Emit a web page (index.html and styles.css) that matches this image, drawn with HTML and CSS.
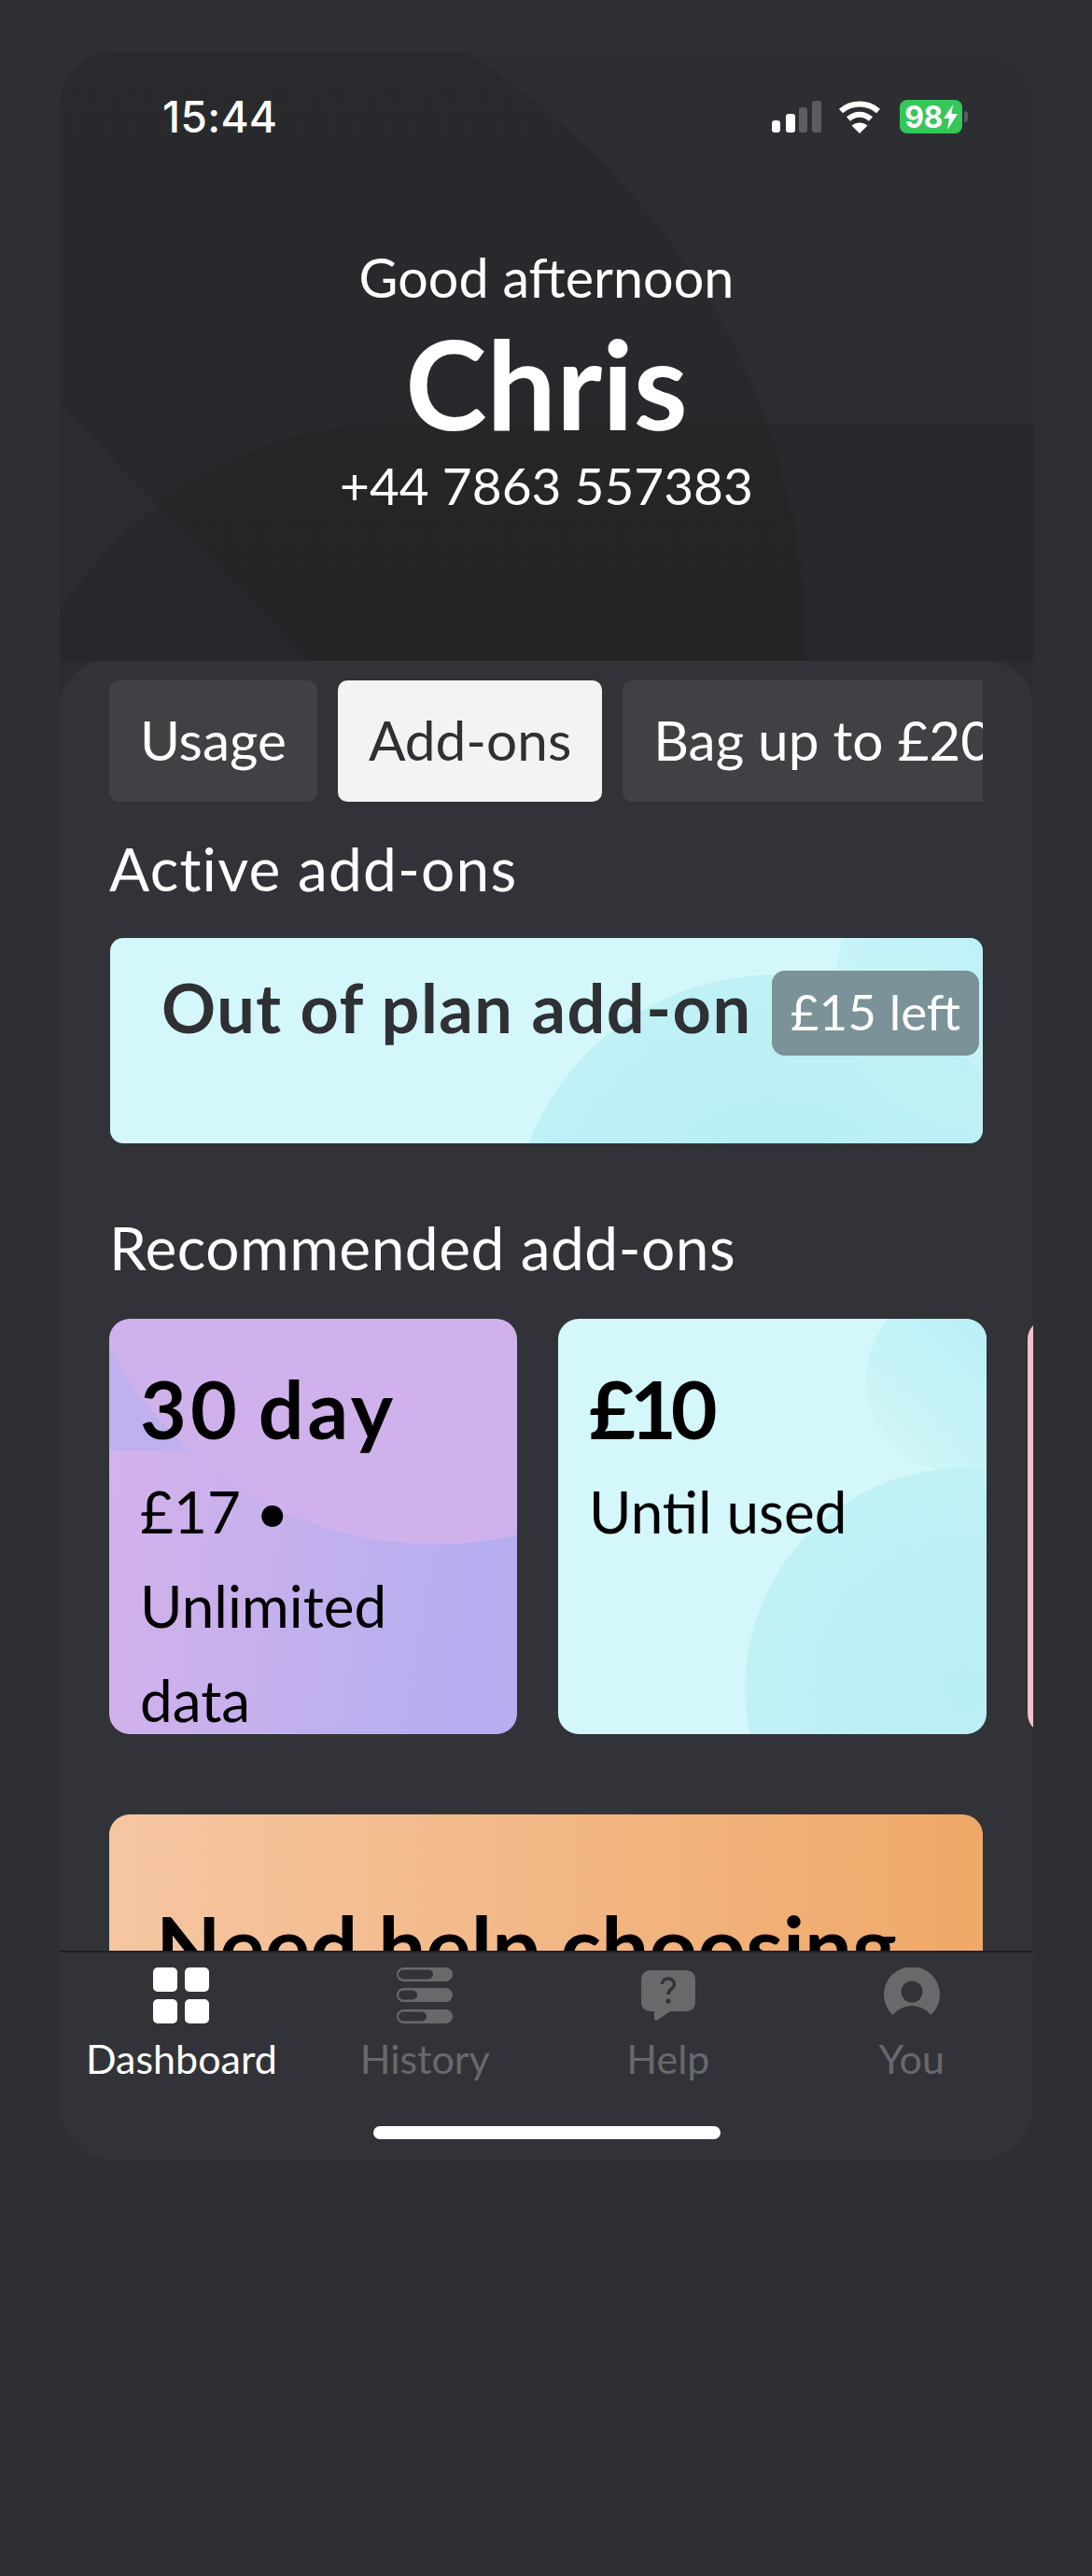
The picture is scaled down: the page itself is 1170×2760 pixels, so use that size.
FILE: index.html
```html
<!DOCTYPE html>
<html>
<head>
  <title>Dashboard</title>
  <link rel="stylesheet" href="styles.css">
</head>
<body>
  <div class="screen">
    <!-- faint shapes behind the header -->
    <svg class="hero-shapes" width="1043" height="652" viewBox="0 0 1043 652">
      <path d="M0 60Q0 0 60 0L435 0C580 90 800 300 800 652L268 652L0 377Z"/>
      <path d="M0 600C90 460 230 397 365 397L1043 397L1043 652L0 652Z"/>
    </svg>

    <div class="status-bar">
      <span class="time">15:44</span>
      <div class="status-icons">
        <svg class="signal" width="53" height="34" viewBox="0 0 53 34">
          <rect x="0" y="21" width="9" height="13" rx="3" fill="#fff"/>
          <rect x="15" y="14" width="10" height="20" rx="3" fill="#fff"/>
          <rect x="29" y="7" width="9" height="27" rx="3" fill="#5c5d60"/>
          <rect x="43" y="0" width="10" height="34" rx="3" fill="#5c5d60"/>
        </svg>
        <svg class="wifi" width="46" height="35" viewBox="0 0 46 35" fill="none" stroke="#fff" stroke-width="6">
          <path d="M3 11C14 1 32 1 43 11"/>
          <path d="M11 19.500C18 13 28 13 35 19.500"/>
          <path d="M23 35L14.500 26.500C19 22.500 27 22.500 31.500 26.500Z" fill="#fff" stroke="none"/>
        </svg>
        <div class="battery">
          <span class="battery-level">98</span>
          <svg width="15" height="27" viewBox="0 0 15 27"><path d="M10 0L0 15L6 15L4 27L15 10L8.500 10Z" fill="#fff"/></svg>
        </div>
        <div class="battery-nub"></div>
      </div>
    </div>

    <div class="greeting">
      <p class="hello">Good afternoon</p>
      <h1 class="name">Chris</h1>
      <p class="phone">+44 7863 557383</p>
    </div>

    <div class="panel">
      <div class="content">
        <div class="tabs">
          <div class="tab">Usage</div>
          <div class="tab active">Add-ons</div>
          <div class="tab">Bag up to £20</div>
        </div>

        <h2 class="section-title">Active add-ons</h2>
        <div class="active-card">
          <span class="active-title">Out of plan add-on</span>
          <span class="badge">£15 left</span>
        </div>

        <h2 class="section-title recommended">Recommended add-ons</h2>
        <div class="carousel">
          <div class="addon purple">
            <h3>30 day</h3>
            <p>£17 • Unlimited data</p>
          </div>
          <div class="addon cyan">
            <h3>£10</h3>
            <p>Until used</p>
          </div>
          <div class="addon pink"></div>
        </div>

        <div class="help-card">Need help choosing</div>
      </div>

      <div class="nav">
        <div class="nav-items">
          <div class="nav-item current">
            <svg width="60" height="60" viewBox="0 0 60 60" fill="#fff">
              <rect x="0" y="0" width="26" height="26" rx="5"/>
              <rect x="34" y="0" width="26" height="26" rx="5"/>
              <rect x="0" y="34" width="26" height="26" rx="5"/>
              <rect x="34" y="34" width="26" height="26" rx="5"/>
            </svg>
            <span>Dashboard</span>
          </div>
          <div class="nav-item">
            <svg width="60" height="60" viewBox="0 0 60 60">
              <rect x="0" y="0" width="60" height="15" rx="7.500" fill="#68696b"/>
              <rect x="2" y="2.500" width="37" height="10" rx="5" fill="#323338"/>
              <rect x="0" y="22" width="60" height="15" rx="7.500" fill="#68696b"/>
              <rect x="2" y="24.500" width="20" height="10" rx="5" fill="#323338"/>
              <rect x="0" y="45" width="60" height="15" rx="7.500" fill="#68696b"/>
              <rect x="2" y="47.500" width="30" height="10" rx="5" fill="#323338"/>
            </svg>
            <span>History</span>
          </div>
          <div class="nav-item">
            <svg width="60" height="60" viewBox="0 0 60 60">
              <path d="M12 3L48 3Q59 3 59 14L59 36Q59 47 48 47L32 47L19 56Q15 58 15 54L15 47L12 47Q1 47 1 36L1 14Q1 3 12 3Z" fill="#68696b"/>
              <path d="M23.500 18C23.500 10 36.500 10 36.500 18C36.500 23 30 23 30 29" fill="none" stroke="#323338" stroke-width="3.500"/>
              <circle cx="30" cy="36" r="2.500" fill="#323338"/>
            </svg>
            <span>Help</span>
          </div>
          <div class="nav-item">
            <svg width="60" height="60" viewBox="0 0 60 60">
              <path d="M9.500 51A30 30 0 1 1 50.500 51Q42 41 30 41Q18 41 9.500 51Z" fill="#68696b"/>
              <circle cx="30" cy="26" r="11.500" fill="#323338"/>
            </svg>
            <span>You</span>
          </div>
        </div>
        <div class="home-bar"></div>
      </div>
    </div>
  </div>
</body>
</html>
```

FILE: styles.css
```css
/* page and screen frame */
body {
  margin: 0;
  height: 2760px;
  overflow: hidden;
  background-color: #2e2f33;
  font-family: Lato, "Liberation Sans", sans-serif;
  color: #fff;
}
p, h1, h2, h3 {
  margin: 0;
  font-weight: 400;
}
.screen {
  position: relative;
  box-sizing: border-box;
  display: flex;
  flex-direction: column;
  width: 1043px;
  height: 2259px;
  margin: 56px 0 0 64px;
  border-radius: 60px;
  overflow: hidden;
  background: linear-gradient(#2d2e32, #2b2c30 652px);
}
.hero-shapes {
  position: absolute;
  top: 0;
  left: 0;
  fill: rgba(28, 28, 31, 0.24);
}

/* status bar */
.status-bar {
  position: relative;
  display: flex;
  justify-content: space-between;
  align-items: center;
  height: 36px;
  margin-top: 51px;
  padding: 0 70px 0 110px;
}
.time {
  font-family: Inter, sans-serif;
  font-size: 46px;
  font-weight: 500;
  letter-spacing: 0.3px;
}
.status-icons {
  display: flex;
  align-items: center;
}
.signal {
  margin-right: 18px;
}
.wifi {
  margin-right: 20px;
}
.battery {
  display: flex;
  justify-content: center;
  align-items: center;
  gap: 1px;
  width: 67px;
  height: 36px;
  border-radius: 8px;
  background-color: #34c759;
}
.battery-level {
  font-family: Inter, sans-serif;
  font-size: 32px;
  font-weight: 700;
  letter-spacing: -0.5px;
}
.battery-nub {
  width: 4px;
  height: 12px;
  margin-left: 2px;
  border-radius: 0 4px 4px 0;
  background-color: #5c5d60;
}

/* greeting */
.greeting {
  position: relative;
  text-align: center;
}
.hello {
  margin-top: 121px;
  font-size: 57.500px;
  line-height: 66px;
}
.name {
  margin-top: 20px;
  font-size: 132px;
  font-weight: 700;
  line-height: 120px;
}
.phone {
  margin-top: 17px;
  font-size: 55px;
  line-height: 66px;
}

/* lower panel */
.panel {
  position: absolute;
  top: 652px;
  left: 0;
  right: 0;
  bottom: 0;
  display: flex;
  flex-direction: column;
  border-radius: 50px 50px 0 0;
  background-color: #323338;
}
.content {
  flex: 1;
  min-height: 0;
  overflow: hidden;
  padding: 21px 0 0 53px;
}
.tabs {
  display: flex;
  gap: 22px;
  width: 936px;
  overflow: hidden;
}
.tab {
  flex-shrink: 0;
  box-sizing: border-box;
  height: 130px;
  padding: 0 33px;
  border-radius: 10px;
  background-color: #3f4145;
  font-size: 58.500px;
  line-height: 126px;
}
.tab.active {
  background-color: #f3f3f3;
  color: #2f3034;
}
.section-title {
  margin-top: 32px;
  font-size: 64px;
  letter-spacing: 1.200px;
  line-height: 80px;
}
.section-title.recommended {
  margin-top: 72px;
  letter-spacing: 0.500px;
}

/* active add-on */
.active-card {
  position: relative;
  box-sizing: border-box;
  display: flex;
  align-items: center;
  justify-content: space-between;
  width: 935px;
  height: 220px;
  margin: 34px 0 0 1px;
  padding: 32px 4px 92px 55px;
  border-radius: 14px;
  overflow: hidden;
  background:
    radial-gradient(circle at 712px 322px, #b2eef6 0, #bff1f5 282px, transparent 283px),
    #d3f7fb;
  color: #2f3034;
}
/* paler circle in the top right corner */
.active-card::before {
  content: "";
  position: absolute;
  top: -105px;
  left: 777px;
  width: 310px;
  height: 310px;
  border-radius: 50%;
  background: linear-gradient(225deg, rgba(170, 236, 245, 0.9), rgba(215, 246, 242, 0.3));
}
.active-title {
  position: relative;
  top: -6px;
  font-size: 72px;
  font-weight: 700;
  letter-spacing: 1.500px;
}
.badge {
  position: relative;
  box-sizing: border-box;
  width: 222px;
  height: 91px;
  border-radius: 14px;
  background-color: #7a9298;
  color: #fff;
  font-size: 53px;
  line-height: 88px;
  text-align: center;
}

/* recommended add-ons */
.carousel {
  display: flex;
  gap: 44px;
  height: 445px;
  margin-top: 36px;
  overflow: hidden;
}
.addon {
  position: relative;
  flex-shrink: 0;
  box-sizing: border-box;
  height: 445px;
  padding: 46px 30px 0 33px;
  border-radius: 22px;
  overflow: hidden;
  color: #000;
}
.addon h3 {
  position: relative;
  font-size: 86px;
  font-weight: 700;
  line-height: 100px;
}
.addon p {
  position: relative;
  margin-top: 10px;
  font-size: 62px;
  line-height: 101px;
}
.addon.purple {
  width: 437px;
  background:
    radial-gradient(circle at 349px -152px, #cfb2ec 393px, transparent 394px),
    linear-gradient(#bfb0f0 141px, transparent 141px),
    linear-gradient(100deg, #d6b2ea, #b6aef0 85%);
}
.addon.purple h3 {
  letter-spacing: 4px;
  word-spacing: -6px;
}
.addon.cyan {
  width: 459px;
  background:
    radial-gradient(circle at 437px 396px, #b8eff5 0, #c0f1f5 236px, transparent 237px),
    #d3f7fb;
}
.addon.cyan::before {
  content: "";
  position: absolute;
  top: -35px;
  left: 330px;
  width: 200px;
  height: 200px;
  border-radius: 50%;
  background: linear-gradient(225deg, rgba(170, 236, 245, 0.9), rgba(215, 246, 242, 0.4));
}
.addon.cyan h3 {
  letter-spacing: -6px;
}
.addon.pink {
  width: 200px;
  background-color: #f6bfcd;
}
.help-card {
  box-sizing: border-box;
  width: 936px;
  height: 240px;
  margin-top: 86px;
  padding: 90px 0 0 50px;
  border-radius: 22px;
  background: linear-gradient(90deg, #f5c6a2, #f0a868);
  color: #000;
  font-size: 90.500px;
  font-weight: 700;
  line-height: 100px;
  white-space: nowrap;
}

/* bottom nav */
.nav {
  box-sizing: border-box;
  height: 225px;
  border-top: 2px solid #1f2023;
  background-color: #323338;
}
.nav-items {
  display: grid;
  grid-template-columns: repeat(4, 1fr);
  padding-top: 16px;
}
.nav-item {
  display: flex;
  flex-direction: column;
  align-items: center;
  gap: 11px;
  color: #68696b;
  font-size: 43px;
  line-height: 54px;
}
.nav-item.current {
  color: #fff;
}
.home-bar {
  width: 372px;
  height: 14px;
  margin: 45px auto 0;
  border-radius: 7px;
  background-color: #fff;
}
```
